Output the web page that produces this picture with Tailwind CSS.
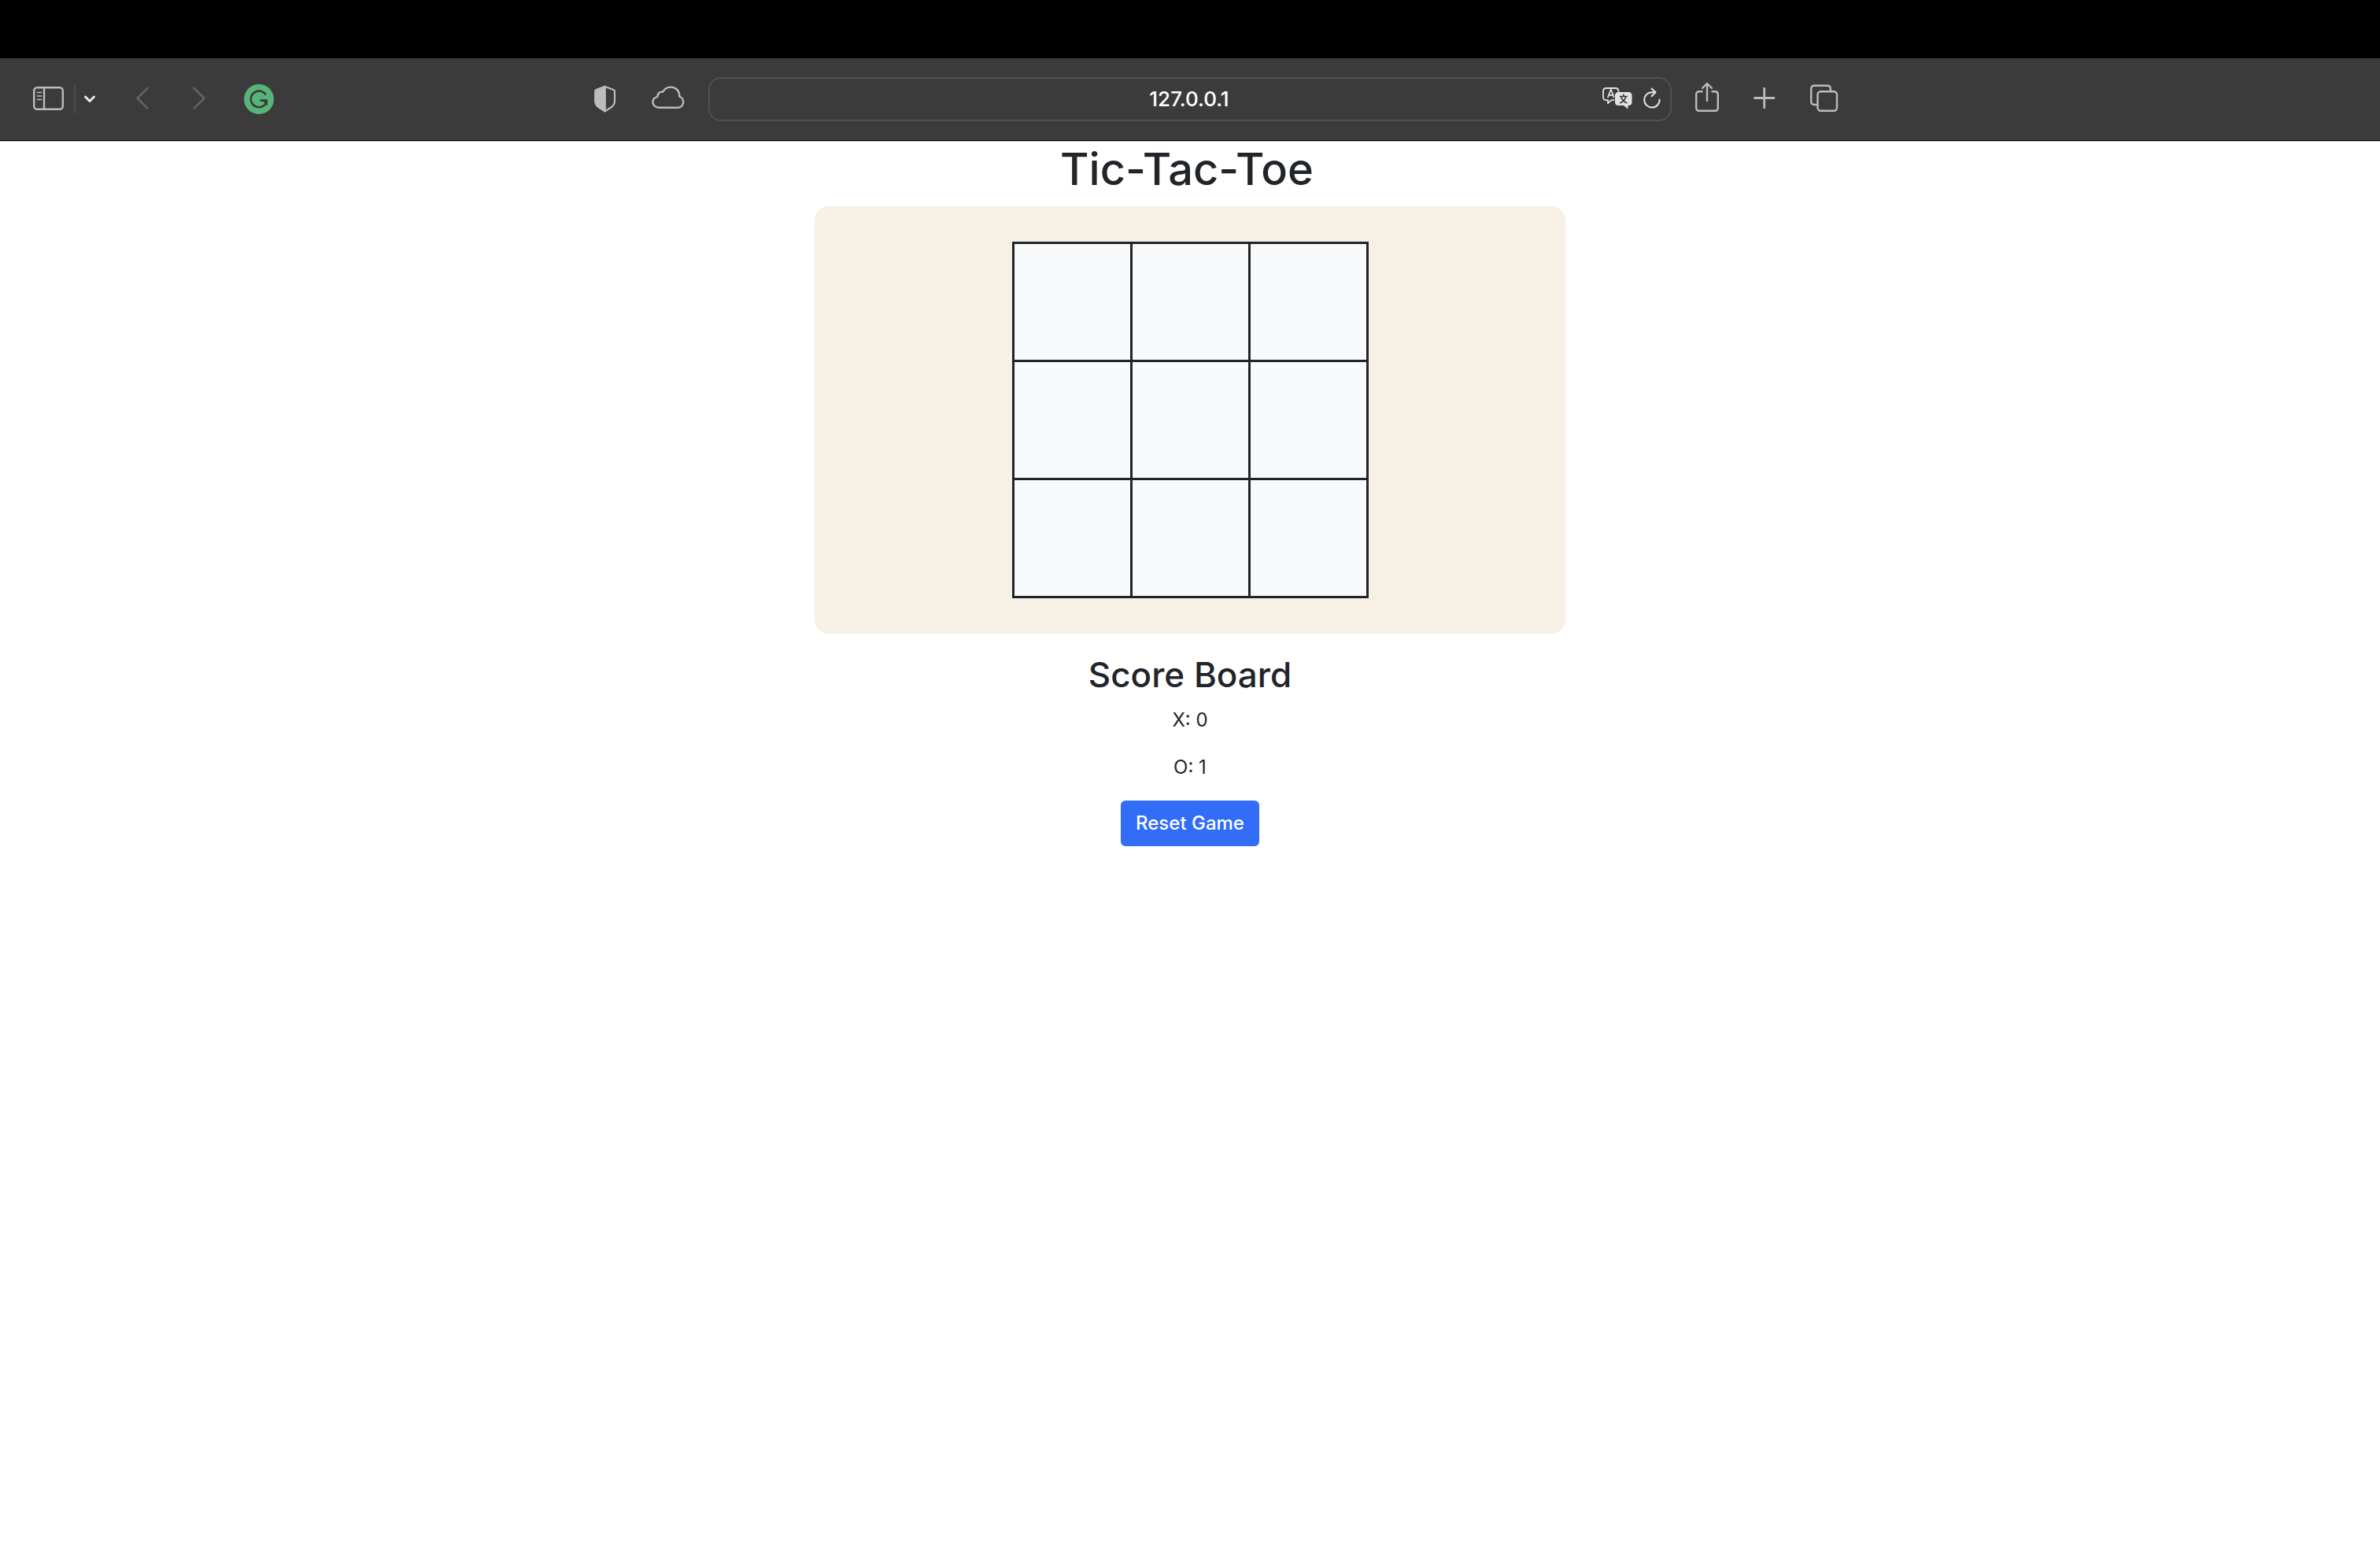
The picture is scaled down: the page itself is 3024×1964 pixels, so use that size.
<!DOCTYPE html>
<html lang="en">
<head>
<meta charset="utf-8">
<meta name="viewport" content="width=device-width, initial-scale=1">
<title>Tic-Tac-Toe</title>
<script src="https://cdn.jsdelivr.net/npm/@tailwindcss/browser@4"></script>
</head>
<body class="min-h-screen bg-white font-['Inter','Liberation_Sans',sans-serif] text-[#212529]">
<header>
  <div class="h-[74px] bg-black"></div>
  <div class="grid h-[106px] grid-cols-[minmax(0,1fr)_minmax(0,1224px)_minmax(0,1fr)] items-center border-b border-[#bdbdbd] bg-[#3b3b3b] pb-px text-[#bcbcbc] shadow-[inset_0_-1px_0_#000]">
    <div class="flex items-center pl-[42px] pr-[30px]">
      <button type="button" aria-label="Show sidebar">
        <svg class="block h-11 w-10" viewBox="0 0 40 44" fill="none" stroke="currentColor" stroke-width="2.4"><rect x="1.2" y="7.2" width="36.6" height="27.6" rx="4"/><path d="M14 7v28"/><path d="M5.5 13.5h5M5.5 18h5M5.5 22.5h5" stroke-width="1.6" stroke-linecap="round"/></svg>
      </button>
      <div class="ml-3 h-9 w-0.5 bg-[#4d4d4d]"></div>
      <button type="button" aria-label="Tab groups" class="ml-2.5 text-[#ebebeb]">
        <svg class="block h-11 w-4" viewBox="0 0 16 44" fill="none" stroke="currentColor" stroke-width="3" stroke-linecap="round" stroke-linejoin="round"><path d="M2.500 19l5.500 5.500 5.500-5.500"/></svg>
      </button>
      <button type="button" aria-label="Back" class="ml-[51px] text-[#636363]">
        <svg class="block h-11 w-4" viewBox="0 0 16 44" fill="none" stroke="currentColor" stroke-width="2.6" stroke-linecap="round" stroke-linejoin="round"><path d="M14.500 8l-13 12.800 13 12.800"/></svg>
      </button>
      <button type="button" aria-label="Forward" class="ml-14 text-[#636363]">
        <svg class="block h-11 w-4" viewBox="0 0 16 44" fill="none" stroke="currentColor" stroke-width="2.600" stroke-linecap="round" stroke-linejoin="round"><path d="M1.500 8l13 12.800-13 12.800"/></svg>
      </button>
      <button type="button" aria-label="Grammarly" class="ml-[49px]">
        <svg class="block h-11 w-[38px]" viewBox="0 0 38 44"><circle cx="19" cy="22" r="19" fill="#57b477"/><g fill="none" stroke="#3b3b3b" stroke-width="2.600"><path d="M27.800 16.500A10.300 10.300 0 1 0 28.500 26"/><path d="M20.500 23.700h7.800"/></g><path d="M20.500 22.400h9.500v8l-7.500-7.500z" fill="#3b3b3b"/></svg>
      </button>
      <button type="button" aria-label="Privacy report" class="ml-auto">
        <svg class="block h-11 w-7" viewBox="0 0 28 44" fill="none" stroke="currentColor" stroke-width="2.200" stroke-linejoin="round"><path d="M13.800 6L25 10.200q1 .4 1 1.500V24.500q0 4.500-4 7.500l-8.200 5.300L5.500 32q-4-3-4-7.500V11.700q0-1.100 1-1.500z"/><path d="M13.800 6v31.300L5.500 32q-4-3-4-7.500V11.700q0-1.100 1-1.500z" fill="currentColor"/></svg>
      </button>
      <button type="button" aria-label="iCloud tabs" class="ml-[45px]">
        <svg class="block h-11 w-[42px]" viewBox="0 0 42 44" fill="none" stroke="currentColor" stroke-width="2.400" stroke-linejoin="round"><path d="M9.500 32.800H33a7.300 7.300 0 0 0 2.300-14.200C35.600 11.500 30.500 6.600 24.500 6.600c-4.600 0-8.400 2.400-10.400 6.200-3.700-.8-6.800 2-6.600 6C3.800 19.700 1.400 22.300 1.400 25.500c0 4.200 3.400 7.300 8.100 7.300z"/></svg>
      </button>
    </div>

    <form class="flex h-14 items-center rounded-2xl border-2 border-[#505050] pl-[84px] pr-3 text-[#e3e3e3]">
      <input type="text" aria-label="Address" value="127.0.0.1" class="min-w-0 flex-1 bg-transparent text-center text-[26px] leading-8 font-medium text-white outline-none">
      <button type="button" aria-label="Translate">
        <svg class="block h-11 w-[38px]" viewBox="0 0 38 44" fill="none" stroke="currentColor"><path d="M15 23.200h-3.500L7 27.200v-4H5q-4 0-4-4V12q0-4 4-4h11.500q4 0 4 4v1" stroke-width="1.800" stroke-linejoin="round"/><path d="M6.800 20l4-10.500 4 10.500M8.200 16.800h5.200" stroke-width="1.700"/><path d="M20.500 13H33q4.500 0 4.500 4.500v8Q37.500 30 33 30h-.5v4.500L27 30h-6.500Q16 30 16 25.500v-8Q16 13 20.500 13z" fill="currentColor" stroke="none"/><path d="M26.800 15.500v3M21.800 18.500h10M30 18.500q-2 6.500-8 8.500M23.500 18.500q2 6.500 8 8.500" stroke="#3b3b3b" stroke-width="1.700"/></svg>
      </button>
      <button type="button" aria-label="Reload" class="ml-3.5">
        <svg class="block h-11 w-[22px]" viewBox="0 0 22 44" fill="none" stroke="currentColor" stroke-width="2" stroke-linecap="round" stroke-linejoin="round"><path d="M20.600 22.500a9.700 9.700 0 1 1-9.700-9.300h4"/><path d="M10.500 8.500l5 4.800-5 5"/></svg>
      </button>
    </form>

    <div class="flex items-center pl-7">
      <button type="button" aria-label="Share">
        <svg class="block h-11 w-8" viewBox="0 0 32 44" fill="none" stroke="currentColor" stroke-width="2.400" stroke-linecap="round" stroke-linejoin="round"><path d="M10.500 12.200H7q-3.800 0-3.800 3.800v17q0 3.800 3.800 3.800h20q3.800 0 3.800-3.800V16q0-3.800-3.800-3.800h-3.500"/><path d="M17 24V2.500M11 8l6-6 6 6"/></svg>
      </button>
      <button type="button" aria-label="New tab" class="ml-11">
        <svg class="block h-11 w-7" viewBox="0 0 28 44" fill="none" stroke="currentColor" stroke-width="2.800" stroke-linecap="round"><path d="M1.500 20.500h24.500M13.700 8.300v24.500"/></svg>
      </button>
      <button type="button" aria-label="Tab overview" class="ml-11">
        <svg class="block h-11 w-9" viewBox="0 0 36 44" fill="none" stroke="currentColor" stroke-width="2.400"><rect x="9.500" y="12.200" width="24.500" height="24.500" rx="4"/><path d="M9 29H5.200q-4 0-4-4V8.800q0-4 4-4h16.600q4 0 4 4v3"/></svg>
      </button>
    </div>
  </div>
</header>

<main class="flex flex-col items-center text-2xl leading-9">
  <h1 class="mb-3 pr-2 text-[56px] leading-[70px] font-medium">Tic-Tac-Toe</h1>
  <section aria-label="Board" class="flex w-full max-w-[954px] justify-center rounded-[18px] bg-[#f7f0e4] py-[45px]">
    <div class="grid grid-cols-3 gap-[3px] border-3 border-[#212529] bg-[#212529]">
      <button type="button" aria-label="Square 1" class="size-[147px] bg-[#f8f9fa]"></button>
      <button type="button" aria-label="Square 2" class="size-[147px] bg-[#f8f9fa]"></button>
      <button type="button" aria-label="Square 3" class="size-[147px] bg-[#f8f9fa]"></button>
      <button type="button" aria-label="Square 4" class="size-[147px] bg-[#f8f9fa]"></button>
      <button type="button" aria-label="Square 5" class="size-[147px] bg-[#f8f9fa]"></button>
      <button type="button" aria-label="Square 6" class="size-[147px] bg-[#f8f9fa]"></button>
      <button type="button" aria-label="Square 7" class="size-[147px] bg-[#f8f9fa]"></button>
      <button type="button" aria-label="Square 8" class="size-[147px] bg-[#f8f9fa]"></button>
      <button type="button" aria-label="Square 9" class="size-[147px] bg-[#f8f9fa]"></button>
    </div>
  </section>
  <section class="flex flex-col items-center pt-6">
    <h2 class="mb-3 text-[44px] leading-[56px] font-medium">Score Board</h2>
    <p class="mb-6">X: 0</p>
    <p class="mb-6">O: 1</p>
    <button type="button" class="h-[58px] rounded-md bg-[#316df6] px-[19px] font-medium text-white">Reset Game</button>
  </section>
</main>
</body>
</html>
